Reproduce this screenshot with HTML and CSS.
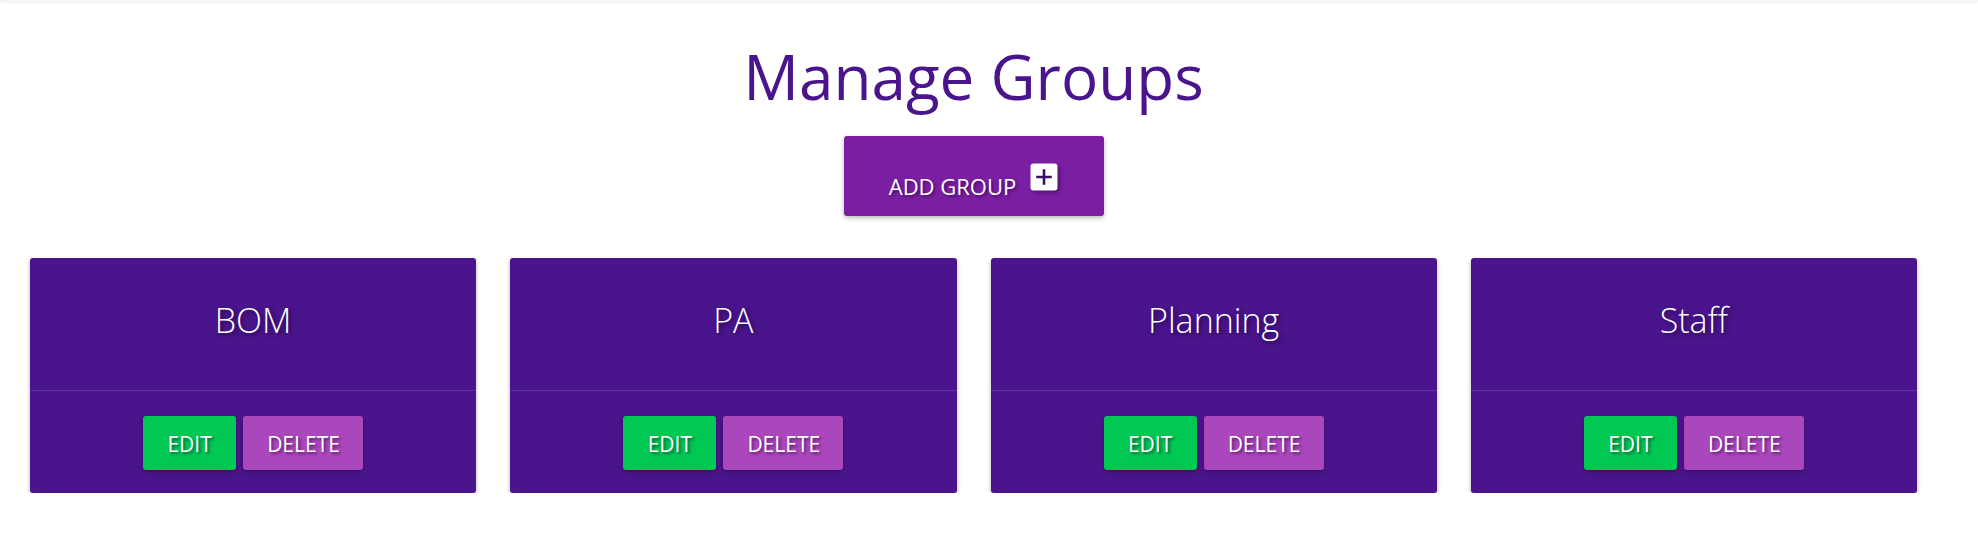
FILE: index.html
```html
<!DOCTYPE html>
<html lang="en">
<head>
<meta charset="utf-8">
<title>Manage Groups</title>
<link rel="stylesheet" href="styles.css">
</head>
<body>
<div class="topbar"></div>
<main class="page">
  <h1 class="title">Manage Groups</h1>
  <div class="actions">
    <button class="add-btn" type="button">
      <span class="add-label">ADD GROUP</span>
      <svg class="add-icon" width="28" height="28" viewBox="0 0 28 28" aria-hidden="true">
        <rect x="0.5" y="0.5" width="27" height="27" rx="3" fill="#ffffff"/>
        <path d="M14 7.5v13M7.5 14h13" stroke="#3b0c66" stroke-width="2.6" stroke-linecap="square"/>
      </svg>
    </button>
  </div>
  <section class="groups">
    <article class="card">
      <div class="card-head"><h2 class="card-title">BOM</h2></div>
      <div class="card-foot">
        <button class="btn btn-edit" type="button">EDIT</button>
        <button class="btn btn-delete" type="button">DELETE</button>
      </div>
    </article>
    <article class="card">
      <div class="card-head"><h2 class="card-title">PA</h2></div>
      <div class="card-foot">
        <button class="btn btn-edit" type="button">EDIT</button>
        <button class="btn btn-delete" type="button">DELETE</button>
      </div>
    </article>
    <article class="card">
      <div class="card-head"><h2 class="card-title">Planning</h2></div>
      <div class="card-foot">
        <button class="btn btn-edit" type="button">EDIT</button>
        <button class="btn btn-delete" type="button">DELETE</button>
      </div>
    </article>
    <article class="card">
      <div class="card-head"><h2 class="card-title">Staff</h2></div>
      <div class="card-foot">
        <button class="btn btn-edit" type="button">EDIT</button>
        <button class="btn btn-delete" type="button">DELETE</button>
      </div>
    </article>
  </section>
</main>
</body>
</html>
```
FILE: styles.css
```css
* { box-sizing: border-box; }

html, body {
  margin: 0;
  padding: 0;
  background: #ffffff;
  font-family: "Open Sans", "Noto Sans", "Liberation Sans", sans-serif;
}

.topbar {
  height: 2px;
  background: #f6f6f6;
  box-shadow: 0 1px 2px rgba(0, 0, 0, 0.06);
}

.page {
  width: 1947px;
  padding: 0 30px;
}

.title {
  margin: 42px 0 0;
  font-size: 62px;
  font-weight: 400;
  line-height: 64px;
  color: #4a148c;
  text-align: center;
}

.actions {
  display: flex;
  justify-content: center;
  margin-top: 28px;
}

.add-btn {
  width: 260px;
  height: 80px;
  display: flex;
  align-items: flex-end;
  justify-content: center;
  gap: 14px;
  padding: 0 0 19px;
  border: none;
  border-radius: 3px;
  background: #7b1fa2;
  color: #ffffff;
  font-family: inherit;
  box-shadow: 0 2px 5px rgba(0, 0, 0, 0.28);
}

.add-label {
  font-size: 22px;
  line-height: 22px;
  font-weight: 400;
  text-shadow: 2px 2px 3px rgba(40, 0, 60, 0.6);
}

.add-icon {
  display: block;
  margin-bottom: 6px;
  filter: drop-shadow(2px 2px 2px rgba(40, 0, 60, 0.55));
}

.groups {
  display: grid;
  grid-template-columns: repeat(4, 1fr);
  gap: 34px;
  margin-top: 42px;
}

.card {
  background: #4a148c;
  border-radius: 3px;
  box-shadow: 0 2px 4px rgba(0, 0, 0, 0.3);
  overflow: hidden;
}

.card-head {
  height: 133px;
  padding-top: 45px;
  border-bottom: 1px solid rgba(255, 255, 255, 0.13);
}

.card-title {
  margin: 0;
  font-size: 34px;
  line-height: 34px;
  font-weight: 300;
  color: #ffffff;
  text-align: center;
  text-shadow: 2px 2px 4px rgba(20, 0, 40, 0.7);
}

.card-foot {
  display: flex;
  justify-content: center;
  gap: 7px;
  padding: 25px 0 23px;
}

.btn {
  height: 54px;
  padding: 2px 24px 0;
  border: none;
  border-radius: 3px;
  font-family: inherit;
  font-size: 21px;
  line-height: 21px;
  font-weight: 400;
  color: #ffffff;
  box-shadow: 0 2px 4px rgba(0, 0, 0, 0.25);
  text-shadow: 2px 2px 3px rgba(20, 0, 40, 0.55);
}

.btn-edit {
  background: #00c853;
  width: 93px;
}

.btn-delete {
  background: #ab47bc;
  width: 120px;
}
```
